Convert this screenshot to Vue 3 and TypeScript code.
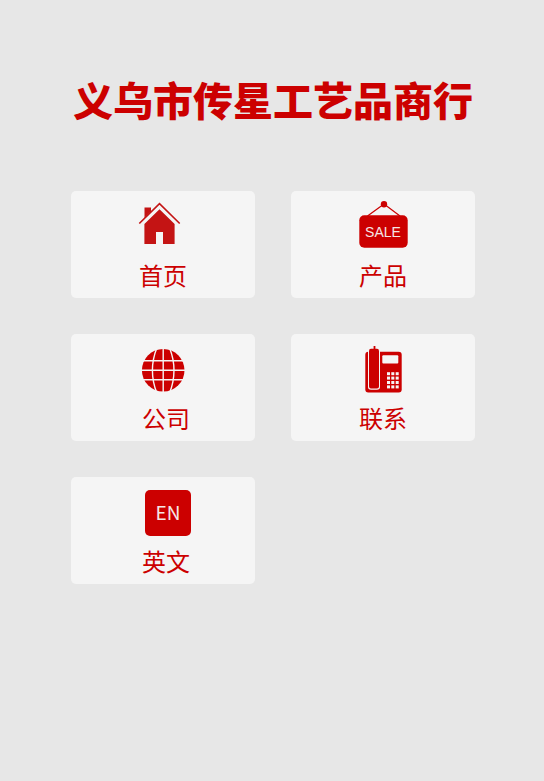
<script setup lang="ts">
type IconName = 'home' | 'sale' | 'globe' | 'phone' | 'english'

interface Tile {
  icon: IconName
  label: string
  inset: boolean
}

const tiles: Tile[] = [
  { icon: 'home', label: '首页', inset: false },
  { icon: 'sale', label: '产品', inset: false },
  { icon: 'globe', label: '公司', inset: true },
  { icon: 'phone', label: '联系', inset: false },
  { icon: 'english', label: '英文', inset: true },
]

const keyColumns = [36, 40.3, 44.7]
const keyRows = [30.2, 34.6, 39, 43.4]
</script>

<template>
  <main class="page">
    <h1 class="title">义乌市传星工艺品商行</h1>
    <nav class="grid" aria-label="导航">
      <a
        v-for="tile in tiles"
        :key="tile.label"
        href="#"
        class="tile"
        :class="{ 'tile-inset': tile.inset }"
      >
        <svg class="icon" viewBox="0 0 64 56" aria-hidden="true">
          <g v-if="tile.icon === 'home'" class="house">
            <path d="M13.5 8.5H20V12.5L13.5 19Z" />
            <path d="M28.5 10.2L43.6 25V45H32V33H25V45H13.4V25Z" />
            <path class="roof" d="M8.3 24.5L28.5 4.7L48.7 24.5" />
          </g>
          <g v-else-if="tile.icon === 'sale'">
            <path class="rope" d="M16.5 17L33 5L49 17" />
            <circle cx="33" cy="5.2" r="3.2" />
            <rect x="8.3" y="16.3" width="48.4" height="32.4" rx="5" />
            <text class="sale-text" x="32" y="38">SALE</text>
          </g>
          <g v-else-if="tile.icon === 'globe'">
            <circle cx="29.2" cy="28.3" r="21.3" />
            <path
              class="meridian"
              d="M29.2 6V51M7 18.8H52M7 28.3H52M7 37.7H52M22.8 6Q14 28.3 22.8 51M35.6 6Q44.4 28.3 35.6 51"
            />
          </g>
          <g v-else-if="tile.icon === 'phone'">
            <rect x="14.3" y="9.8" width="36.4" height="40.8" rx="3" />
            <path class="cradle" d="M17 6H29V45Q29 47.8 26 47.8H20Q17 47.8 17 45Z" />
            <path d="M18 9Q18 6.8 20 6.8H22.6V4H24.4V6.8H26Q28 6.8 28 9V44.5Q28 46.5 26 46.5H20Q18 46.5 18 44.5Z" />
            <rect class="light" x="31.3" y="13.3" width="16" height="8.2" rx="1" />
            <template v-for="y in keyRows" :key="y">
              <rect
                v-for="x in keyColumns"
                :key="x"
                class="light"
                :x="x"
                :y="y"
                width="3"
                height="3"
              />
            </template>
          </g>
          <g v-else>
            <rect x="11" y="5" width="46" height="46" rx="5" />
            <text class="english-text" x="34" y="35">EN</text>
          </g>
        </svg>
        <span class="label">{{ tile.label }}</span>
      </a>
    </nav>
  </main>
</template>

<style>
body {
  background: #e7e7e7;
}
</style>

<style scoped>
.page {
  padding: 69px 69px 36px 71px;
  font-family: 'Noto Sans CJK SC', sans-serif;
  color: #cc0000;
}

.title {
  margin: 0 0 62px;
  font-size: 40px;
  line-height: 60px;
  font-weight: 900;
  text-align: center;
  white-space: nowrap;
}

.grid {
  display: grid;
  grid-template-columns: repeat(2, minmax(0, 1fr));
  gap: 36px;
}

.tile {
  box-sizing: border-box;
  display: flex;
  flex-direction: column;
  align-items: center;
  gap: 2px;
  padding: 8px 0 5px;
  border-radius: 5px;
  background: #f5f5f5;
  color: inherit;
  text-decoration: none;
}

.tile-inset {
  padding-left: 6px;
}

.icon {
  width: 64px;
  height: 56px;
  fill: #cc0000;
}

.house {
  fill: #c41414;
}

.roof {
  fill: none;
  stroke: #c41414;
  stroke-width: 1.6;
}

.rope {
  fill: none;
  stroke: #cc0000;
  stroke-width: 1.2;
}

.meridian {
  fill: none;
  stroke: #f5f5f5;
  stroke-width: 1.4;
}

.cradle,
.light {
  fill: #f5f5f5;
}

.sale-text,
.english-text {
  fill: #f5e6e6;
  text-anchor: middle;
}

.sale-text {
  font-family: 'Liberation Sans', sans-serif;
  font-size: 14px;
}

.english-text {
  font-family: 'Noto Sans CJK SC', sans-serif;
  font-size: 19px;
}

.label {
  font-size: 24px;
  line-height: 36px;
}
</style>
